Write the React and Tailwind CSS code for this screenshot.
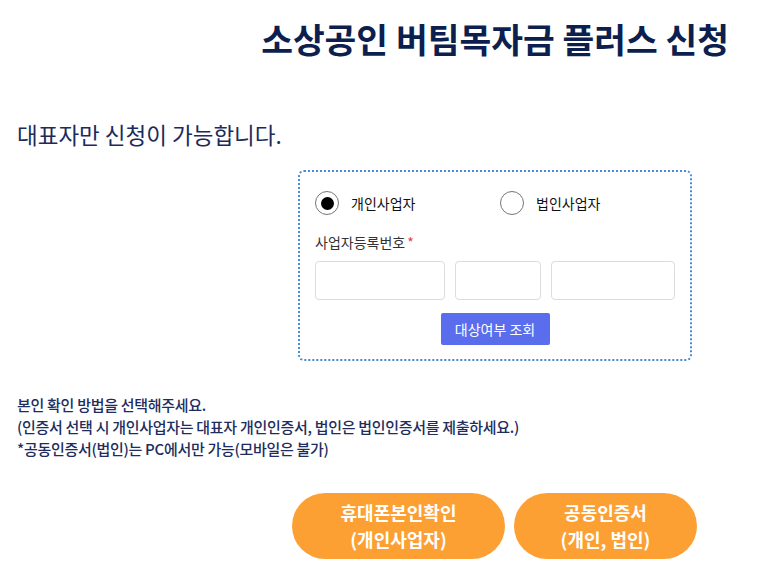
import React, { useState } from 'react';

const font = { fontFamily: '"Noto Sans CJK KR", "Noto Sans", sans-serif' };

function Radio({ checked, label, onClick }) {
  return (
    <label className="flex items-center gap-3 cursor-pointer" onClick={onClick}>
      <span className="w-6 h-6 rounded-full border border-[#767676] bg-white flex items-center justify-center">
        {checked && <span className="w-[13px] h-[13px] rounded-full bg-black" />}
      </span>
      <span className="text-[14px] text-[#111]">{label}</span>
    </label>
  );
}

export default function App() {
  const [type, setType] = useState('personal');

  return (
    <div className="w-[757px] h-[574px] bg-white overflow-hidden" style={font}>
      {/* Title */}
      <div className="flex justify-end pr-[28px] pt-[13px]">
        <h1 className="text-[34.5px] font-bold text-[#0c1f4e] leading-[50px]">
          소상공인 버팀목자금 플러스 신청
        </h1>
      </div>

      <p className="mt-[55px] ml-[17px] text-[22.5px] text-[#1b2b5c] leading-[32px]">
        대표자만 신청이 가능합니다.
      </p>

      {/* Form box */}
      <div className="mt-[20px] ml-[298px] w-[394px] h-[191px] border-2 border-dotted border-[#4a8ad8] rounded-[6px] px-[15px] pt-[19px]">
        <div className="flex">
          <div className="w-[185px]">
            <Radio checked={type === 'personal'} label="개인사업자" onClick={() => setType('personal')} />
          </div>
          <Radio checked={type === 'corp'} label="법인사업자" onClick={() => setType('corp')} />
        </div>
        <div className="mt-[17px] text-[14px] text-[#333]">
          사업자등록번호<span className="text-[#e5403a] ml-[2px]">*</span>
        </div>
        <div className="mt-[8px] flex gap-[10px]">
          <input className="w-[130px] h-[39px] border border-[#dcdcdc] rounded-[4px] outline-none" />
          <input className="w-[86px] h-[39px] border border-[#dcdcdc] rounded-[4px] outline-none" />
          <input className="w-[124px] h-[39px] border border-[#dcdcdc] rounded-[4px] outline-none" />
        </div>
        <div className="mt-[13px] flex justify-center">
          <button className="w-[109px] h-[32px] bg-[#5a6ded] text-white text-[14px] rounded-[2px]">
            대상여부 조회
          </button>
        </div>
      </div>

      {/* Notice */}
      <div className="mt-[33px] ml-[17px] text-[15px] leading-[22px] text-[#1e2d5e] font-medium tracking-[-0.3px]">
        <p>본인 확인 방법을 선택해주세요.</p>
        <p>(인증서 선택 시 개인사업자는 대표자 개인인증서, 법인은 법인인증서를 제출하세요.)</p>
        <p>*공동인증서(법인)는 PC에서만 가능(모바일은 불가)</p>
      </div>

      {/* Actions */}
      <div className="mt-[33px] ml-[292px] flex gap-[9px]">
        <button className="w-[213px] h-[66px] rounded-full bg-[#fda033] text-white text-[18px] font-bold leading-[27px]">
          휴대폰본인확인<br />(개인사업자)
        </button>
        <button className="w-[183px] h-[66px] rounded-full bg-[#fda033] text-white text-[18px] font-bold leading-[27px]">
          공동인증서<br />(개인, 법인)
        </button>
      </div>
    </div>
  );
}
